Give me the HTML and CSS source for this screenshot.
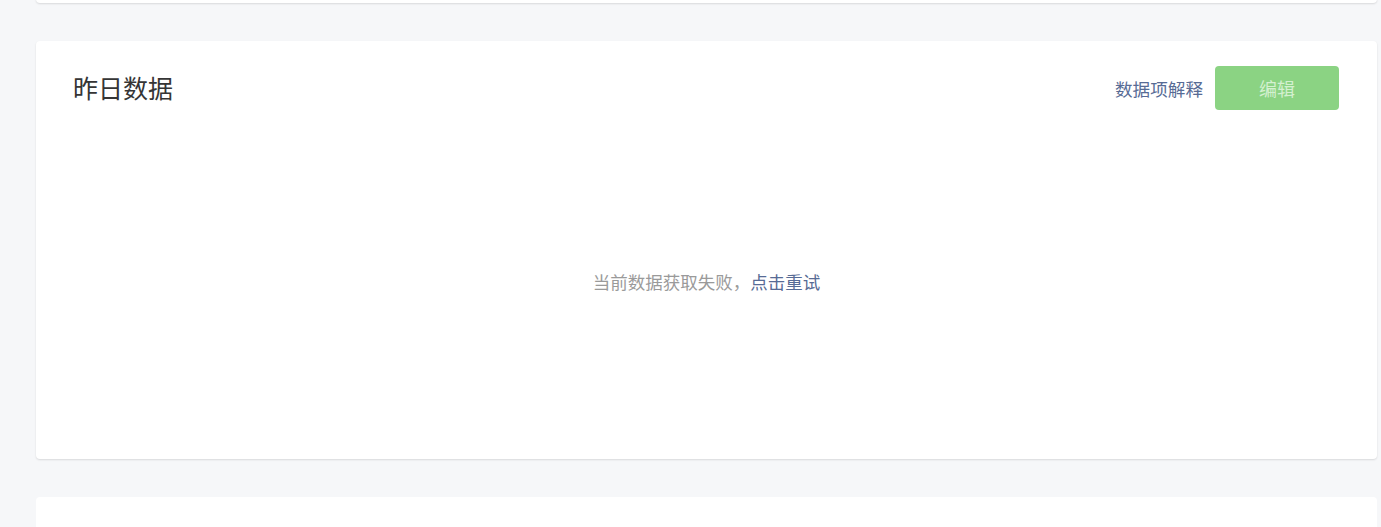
FILE: index.html
```html
<!DOCTYPE html>
<html lang="zh-CN">
<head>
<meta charset="utf-8">
<title>昨日数据</title>
<link rel="stylesheet" href="styles.css">
</head>
<body>
<main class="page">
  <section class="card card-prev"></section>
  <section class="card card-data">
    <header class="card-head">
      <h2 class="card-title">昨日数据</h2>
      <div class="card-actions">
        <a class="link" href="#">数据项解释</a>
        <button class="btn btn-disabled" type="button" disabled>编辑</button>
      </div>
    </header>
    <div class="card-body">
      <p class="empty-msg">当前数据获取失败，<a class="link link-retry" href="#">点击重试</a></p>
    </div>
  </section>
  <section class="card card-next"></section>
</main>
</body>
</html>
```

FILE: styles.css
```css
html, body {
  margin: 0;
  padding: 0;
  background: #f6f7f9;
  overflow: hidden;
  font-family: "Noto Sans CJK SC", "Noto Sans", sans-serif;
}

.page {
  display: flex;
  flex-direction: column;
  gap: 38px;
  padding: 0 4px 0 36px;
}

.card {
  background: #fff;
  border-radius: 4px;
  box-shadow: 0 1px 2px rgba(0, 0, 0, 0.12);
}

.card-prev {
  height: 40px;
  margin-top: -37px;
}

.card-next {
  height: 200px;
  box-shadow: none;
}

.card-data {
  height: 418px;
  display: flex;
  flex-direction: column;
}

.card-head {
  display: flex;
  align-items: center;
  justify-content: space-between;
  height: 44px;
  padding: 25px 38px 0 37px;
}

.card-title {
  margin: 0 0 2px;
  font-size: 25px;
  font-weight: 400;
  color: #353535;
  line-height: 42px;
}

.card-actions {
  display: flex;
  align-items: center;
  gap: 12px;
}

.link {
  color: #576b95;
  text-decoration: none;
  font-size: 17.6px;
}

.btn {
  width: 124px;
  height: 44px;
  border: 0;
  border-radius: 4px;
  font-family: inherit;
  font-size: 18px;
  padding: 0;
}

.btn-disabled {
  background: #8bd383;
  color: #d4f0d0;
}

.card-body {
  flex: 1;
  display: flex;
  align-items: center;
  justify-content: center;
  padding-bottom: 5px;
}

.empty-msg {
  margin: 0;
  font-size: 17.5px;
  line-height: 24px;
  color: #9a9a9a;
}

.link-retry {
  font-size: inherit;
}
```
